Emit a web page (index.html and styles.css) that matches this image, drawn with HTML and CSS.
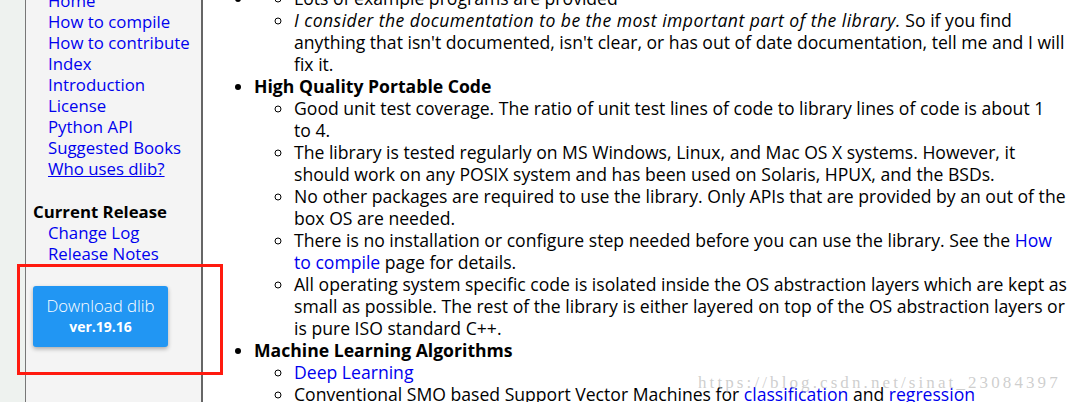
FILE: index.html
```html
<!DOCTYPE html>
<html lang="en">
<head>
    <meta charset="UTF-8">
    <title>dlib C++ Library</title>
    <link rel="stylesheet" href="styles.css">
</head>
<body>
    <div class="page">
        <div class="strip"></div>
        <div class="sidebar">
            <ul class="nav">
                <li><a href="#">Home</a></li>
                <li><a href="#">How to compile</a></li>
                <li><a href="#">How to contribute</a></li>
                <li><a href="#">Index</a></li>
                <li><a href="#">Introduction</a></li>
                <li><a href="#">License</a></li>
                <li><a href="#">Python API</a></li>
                <li><a href="#">Suggested Books</a></li>
                <li><a href="#" class="visited">Who uses dlib?</a></li>
            </ul>
            <div class="nav-title">Current Release</div>
            <ul class="nav">
                <li><a href="#">Change Log</a></li>
                <li><a href="#">Release Notes</a></li>
            </ul>
            <a href="#" class="download">
                Download dlib
                <span class="version">ver.19.16</span>
            </a>
            <div class="highlight"></div>
        </div>
        <div class="main">
            <ul class="features">
                <li>
                    <ul>
                        <li>Lots of example programs are provided</li>
                        <li><i>I consider the documentation to be the most important part of the library.</i> So if you find anything that isn't documented, isn't clear, or has out of date documentation, tell me and I will fix it.</li>
                    </ul>
                </li>
                <li><b>High Quality Portable Code</b>
                    <ul>
                        <li>Good unit test coverage. The ratio of unit test lines of code to library lines of code is about 1 to&nbsp;4.</li>
                        <li>The library is tested regularly on MS Windows, Linux, and Mac OS X systems. However, it should work on any POSIX system and has been used on Solaris, HPUX, and the BSDs.</li>
                        <li>No other packages are required to use the library. Only APIs that are provided by an out of the box OS are needed.</li>
                        <li>There is no installation or configure step needed before you can use the library. See the <a href="#">How to compile</a> page for details.</li>
                        <li>All operating system specific code is isolated inside the OS abstraction layers which are kept as small as possible. The rest of the library is either layered on top of the OS abstraction layers or is pure ISO standard C++.</li>
                    </ul>
                </li>
                <li><b>Machine Learning Algorithms</b>
                    <ul>
                        <li><a href="#">Deep Learning</a></li>
                        <li>Conventional SMO based Support Vector Machines for <a href="#">classification</a> and <a href="#">regression</a></li>
                    </ul>
                </li>
            </ul>
            <div class="watermark">https://blog.csdn.net/sinat_23084397</div>
        </div>
    </div>
</body>
</html>
```

FILE: styles.css
```css
body {
    margin: 0;
    padding: 0;
    background-color: #fff;
    font-family: "Open Sans", "Noto Sans", sans-serif;
    font-size: 16.8px;
    color: #000;
    overflow: hidden;
}

a {
    color: #0000ee;
    text-decoration: none;
}

.page {
    display: flex;
    height: 402px;
}

.strip {
    width: 25px;
    background-color: #eef2ef;
}

.sidebar {
    position: relative;
    flex: none;
    width: 168px;
    background-color: #f4f4f4;
    border-left: 1px solid #777;
    border-right: 2px solid #666;
    padding: 0 0 0 7px;
    margin-top: -10px;
}

.nav {
    list-style: none;
    margin: 0;
    padding: 0 0 0 15px;
    line-height: 21px;
    white-space: nowrap;
}

.nav a.visited {
    text-decoration: underline;
}

.nav-title {
    font-weight: bold;
    line-height: 21px;
    margin-top: 22px;
}

.download {
    display: block;
    width: 135px;
    margin: 22px 0 0 0;
    padding: 9px 0 10px;
    background-color: #2196f3;
    color: #fff;
    text-align: center;
    border-radius: 3px;
    font-weight: 300;
    line-height: 21px;
    box-shadow: 0 2px 4px rgba(0, 0, 0, 0.3);
}

.version {
    display: block;
    font-size: 14px;
    font-weight: bold;
    line-height: 21px;
}

.highlight {
    position: absolute;
    left: -9px;
    top: 274px;
    width: 200px;
    height: 105px;
    border: 3px solid #ff1a0f;
}

.main {
    position: relative;
    flex: 1;
    margin-top: -13px;
}

.features {
    margin: 0;
    padding: 0 0 0 51px;
    font-size: 17.6px;
    line-height: 22px;
}

.features i {
    letter-spacing: 0.45px;
}

.features ul {
    list-style-type: circle;
    margin: 0;
    padding-left: 40px;
}

.watermark {
    position: absolute;
    left: 495px;
    top: 386px;
    font-family: "Liberation Serif", serif;
    font-size: 17px;
    letter-spacing: 3.1px;
    color: rgba(185, 185, 185, 0.7);
}
```
